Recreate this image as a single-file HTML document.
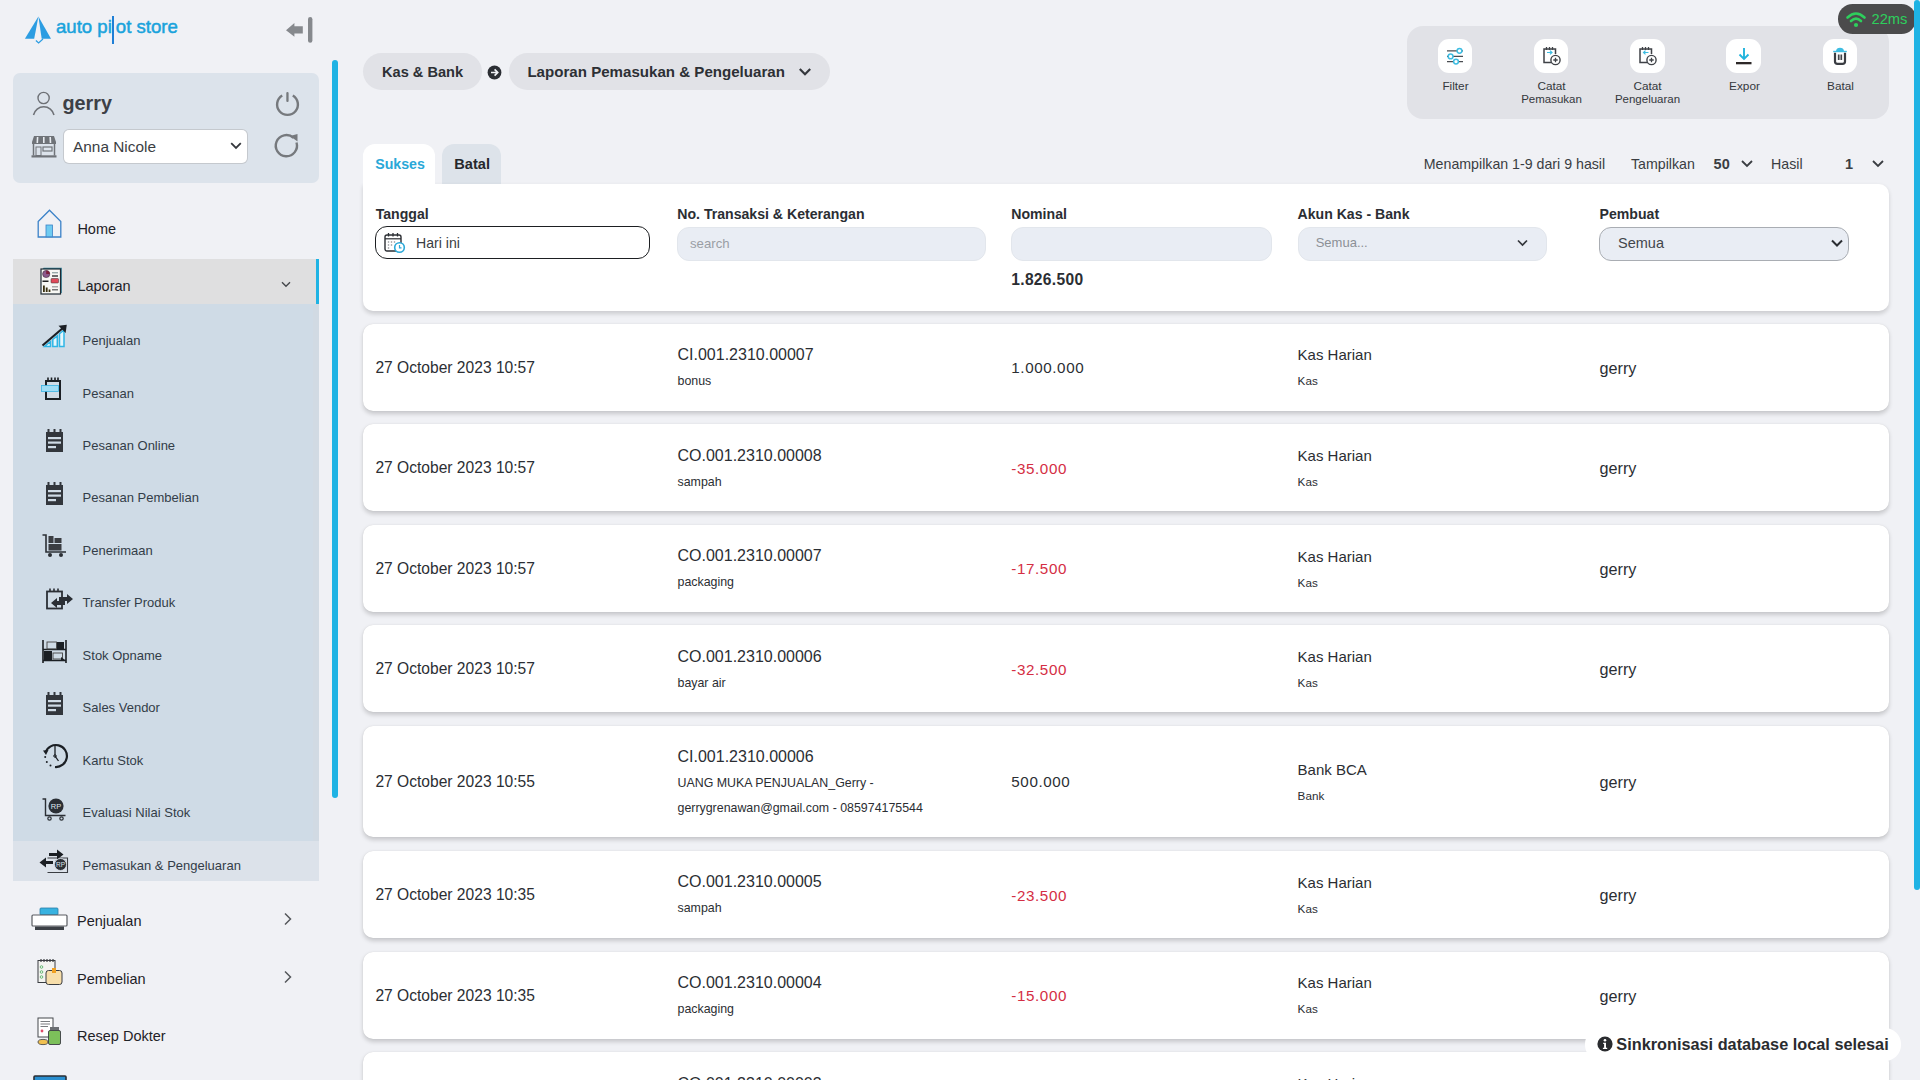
<!DOCTYPE html>
<html><head><meta charset="utf-8"><title>Laporan Pemasukan &amp; Pengeluaran</title>
<style>
html,body{margin:0;padding:0;}
body{width:1920px;height:1080px;overflow:hidden;position:relative;background:#f0f1f5;font-family:"Liberation Sans",sans-serif;}
.t{position:absolute;line-height:1;white-space:nowrap;}
svg{overflow:visible;}
</style></head><body>
<svg style="position:absolute;left:24px;top:15px;" width="28" height="30" viewBox="0 0 28 30">
<path d="M14.4 1.6 L0.9 23.8 L10.2 23.8 Z" fill="#2c9de2"/>
<path d="M14.4 1.6 L27 23.8 L17.7 23.8 Z" fill="#2c9de2"/>
<path d="M11.9 25.5 L14.6 28 L19 24" fill="none" stroke="#2c9de2" stroke-width="1.2"/>
</svg>
<div class="t" style="left:56.00px;top:18.16px;font-size:18.6px;color:#1aa3dc;-webkit-text-stroke:0.5px #1aa3dc;">auto pi</div>
<div style="position:absolute;left:112px;top:16px;width:2.2px;height:28px;background:#1f7fd6;border-radius:0px;"></div>
<div class="t" style="left:115.80px;top:18.16px;font-size:18.6px;color:#1aa3dc;-webkit-text-stroke:0.5px #1aa3dc;">ot store</div>
<svg style="position:absolute;left:284px;top:15px;" width="32" height="30" viewBox="0 0 32 30">
<path d="M2 15.2 L10.4 8 L10.4 11.3 L18.8 11.3 L18.8 18.5 L10.4 18.5 L10.4 21.7 Z" fill="#86898d"/>
<rect x="24" y="2" width="4.4" height="25.8" rx="2.2" fill="#86898d"/>
</svg>
<div style="position:absolute;left:332px;top:60px;width:6px;height:738px;background:#1fb3e4;border-radius:3px;"></div>
<div style="position:absolute;left:13px;top:73px;width:306px;height:109.5px;background:#dce3eb;border-radius:7px;"></div>
<svg style="position:absolute;left:32px;top:90px;" width="24" height="27" viewBox="0 0 24 27">
<circle cx="11.6" cy="8" r="5.6" fill="none" stroke="#6e7176" stroke-width="1.4"/>
<path d="M1.5 25 A10.5 10.5 0 0 1 22 25" fill="none" stroke="#6e7176" stroke-width="1.5"/>
</svg>
<div class="t" style="left:62.50px;top:94.04px;font-size:19.8px;color:#3d4046;font-weight:700;">gerry</div>
<svg style="position:absolute;left:274px;top:90px;" width="27" height="28" viewBox="0 0 27 28">
<path d="M8.2 5.5 A10.4 10.4 0 1 0 18.8 5.5" fill="none" stroke="#76797d" stroke-width="2.4"/>
<rect x="12.3" y="2" width="2.3" height="10" rx="1.1" fill="#76797d"/>
</svg>
<svg style="position:absolute;left:31px;top:135px;" width="26" height="23" viewBox="0 0 26 23">
<path d="M3 1 L23 1 L25 7 L25 9 L1 9 L1 7 Z" fill="#6f7378"/>
<path d="M6.6 2 L6.3 8 M12.8 2 L12.8 8 M19.2 2 L19.5 8" stroke="#e8ecf1" stroke-width="1.6"/>
<path d="M2.5 9 L2.5 20.5 M23.5 9 L23.5 20.5" stroke="#6f7378" stroke-width="1.5"/>
<rect x="5" y="12" width="5" height="8.5" fill="none" stroke="#6f7378" stroke-width="1"/>
<rect x="12" y="12" width="9" height="4" fill="none" stroke="#6f7378" stroke-width="1.2"/>
<rect x="0.5" y="20.3" width="25" height="2.2" fill="#6f7378"/>
</svg>
<div style="position:absolute;left:64px;top:130px;width:183px;height:33px;background:#ffffff;border-radius:5px;box-shadow:0 0 0 1px #c5c9ce;"></div>
<div class="t" style="left:73.00px;top:138.66px;font-size:15.4px;color:#3b3e43;">Anna Nicole</div>
<svg style="position:absolute;left:230px;top:142px;" width="12" height="8" viewBox="0 0 12 8"><path d="M1.2 1.2 L6 6 L10.8 1.2" fill="none" stroke="#34373c" stroke-width="1.8"/></svg>
<svg style="position:absolute;left:274px;top:132px;" width="27" height="28" viewBox="0 0 27 28">
<path d="M22.5 10.5 A10.6 10.6 0 1 1 19.5 5.8" fill="none" stroke="#76797d" stroke-width="2.4"/>
<path d="M16 4 L23.5 2 L23.5 9.5 Z" fill="#76797d"/>
</svg>
<svg style="position:absolute;left:37px;top:209px;" width="26" height="30" viewBox="0 0 26 30">
<path d="M1.2 12.5 L12.5 1.2 L23.8 12.5 L23.8 28 L1.2 28 Z" fill="none" stroke="#3b82c8" stroke-width="1.3"/>
<rect x="9" y="16" width="6.5" height="11.8" fill="#6fcbf1" stroke="#3b82c8" stroke-width="0.8"/>
</svg>
<div class="t" style="left:77.40px;top:221.83px;font-size:14.5px;color:#1f2227;">Home</div>
<div style="position:absolute;left:13px;top:259px;width:306px;height:45px;background:#dfdfe0;border-radius:0px;"></div>
<div style="position:absolute;left:316px;top:259px;width:3px;height:45px;background:#1fb3e4;border-radius:0px;"></div>
<svg style="position:absolute;left:40px;top:267px;" width="23" height="29" viewBox="0 0 23 29">
<path d="M2.5 2.5 L3.5 0.8 L21.8 0.8 L21.8 25.5 L20.5 27" fill="#2f7f95"/>
<rect x="1" y="2" width="19.5" height="25" fill="#f8f8f4" stroke="#1e2a33" stroke-width="1.2"/>
<circle cx="6.2" cy="7" r="3.6" fill="#8c5a8c" stroke="#3a2a3a" stroke-width="0.6"/><path d="M6.2 7 L6.2 3.4 A3.6 3.6 0 0 1 9.8 7 Z" fill="#7a1f3a"/>
<rect x="12" y="5" width="6" height="1.4" fill="#9aa"/><rect x="12" y="8.3" width="6" height="1.4" fill="#333"/>
<rect x="2.5" y="13.5" width="6" height="1.5" fill="#222"/><rect x="11" y="11.5" width="7.5" height="4.5" rx="0.8" fill="#e14b5a" stroke="#333" stroke-width="0.5"/>
<rect x="3" y="18.5" width="1.8" height="6.5" fill="#3a3010"/><rect x="5.8" y="20.5" width="1.8" height="4.5" fill="#3a3010"/><rect x="8.6" y="22.5" width="1.8" height="2.5" fill="#3a3010"/>
<rect x="12" y="19" width="6" height="1.5" fill="#aaa"/><rect x="12" y="22" width="6" height="1.5" fill="#777"/>
</svg>
<div class="t" style="left:77.40px;top:278.83px;font-size:14.5px;color:#1f2227;">Laporan</div>
<svg style="position:absolute;left:281px;top:281px;" width="11" height="8" viewBox="0 0 11 8"><path d="M1 1.2 L5 5.2 L9 1.2" fill="none" stroke="#45484c" stroke-width="1.4"/></svg>
<div style="position:absolute;left:13px;top:304px;width:306px;height:537px;background:#cfdbe6;border-radius:0px;"></div>
<div style="position:absolute;left:313.2px;top:304px;width:5.8px;height:537px;background:#d1dae3;border-radius:0px;"></div>
<div style="position:absolute;left:13px;top:840.5px;width:306px;height:40px;background:#dce2ea;border-radius:0px;"></div>
<div class="t" style="left:82.60px;top:333.60px;font-size:13px;color:#333d48;">Penjualan</div>
<div class="t" style="left:82.60px;top:386.80px;font-size:13px;color:#333d48;">Pesanan</div>
<div class="t" style="left:82.60px;top:439.00px;font-size:13px;color:#333d48;">Pesanan Online</div>
<div class="t" style="left:82.60px;top:491.20px;font-size:13px;color:#333d48;">Pesanan Pembelian</div>
<div class="t" style="left:82.60px;top:543.60px;font-size:13px;color:#333d48;">Penerimaan</div>
<div class="t" style="left:82.60px;top:596.00px;font-size:13px;color:#333d48;">Transfer Produk</div>
<div class="t" style="left:82.60px;top:648.60px;font-size:13px;color:#333d48;">Stok Opname</div>
<div class="t" style="left:82.60px;top:701.20px;font-size:13px;color:#333d48;">Sales Vendor</div>
<div class="t" style="left:82.60px;top:753.60px;font-size:13px;color:#333d48;">Kartu Stok</div>
<div class="t" style="left:82.60px;top:806.00px;font-size:13px;color:#333d48;">Evaluasi Nilai Stok</div>
<div class="t" style="left:82.60px;top:858.60px;font-size:13px;color:#333d48;">Pemasukan &amp; Pengeluaran</div>
<svg style="position:absolute;left:41px;top:323px;" width="27" height="25" viewBox="0 0 27 25"><path d="M3.5 23.5 L9.5 18.5 L9.5 23.5 Z M11.8 23.5 L11.8 16.5 L16.3 12.8 L16.3 23.5 Z M18.5 23.5 L18.5 10.8 L23 7 L23 23.5 Z" fill="#e6f6fc" stroke="#2fb6e6" stroke-width="1.5" stroke-linejoin="miter"/>
<path d="M1.5 22.5 L22.5 4.5" stroke="#1b1f24" stroke-width="2.2"/><path d="M17.5 2.8 L25.8 1.8 L24.6 10 Z" fill="#1b1f24"/></svg>
<svg style="position:absolute;left:41px;top:377px;" width="22" height="24" viewBox="0 0 22 24"><rect x="5" y="4" width="14" height="18" fill="none" stroke="#1b1f24" stroke-width="2"/>
<path d="M7 0.5 L7 5 M10.5 0.5 L10.5 5 M14 0.5 L14 5 M17 0.5 L17 5" stroke="#1b1f24" stroke-width="1.6"/>
<rect x="0.5" y="8.5" width="17" height="6" fill="#9fdcf5" stroke="#38b4e4" stroke-width="0.8"/></svg>
<svg style="position:absolute;left:46px;top:429px;" width="17" height="24" viewBox="0 0 17 24"><rect x="0" y="3" width="17" height="20" fill="#32363c"/><path d="M2.5 0 L2.5 4 M8.5 0 L8.5 4 M14.5 0 L14.5 4" stroke="#32363c" stroke-width="2"/>
<rect x="2" y="8" width="13" height="2.2" fill="#cfdbe6"/><rect x="2" y="12.5" width="13" height="2.2" fill="#cfdbe6"/><rect x="2" y="17" width="8" height="2.2" fill="#cfdbe6"/></svg>
<svg style="position:absolute;left:46px;top:482px;" width="17" height="24" viewBox="0 0 17 24"><rect x="0" y="3" width="17" height="20" fill="#32363c"/><path d="M2.5 0 L2.5 4 M8.5 0 L8.5 4 M14.5 0 L14.5 4" stroke="#32363c" stroke-width="2"/>
<rect x="2" y="8" width="13" height="2.2" fill="#cfdbe6"/><rect x="2" y="12.5" width="13" height="2.2" fill="#cfdbe6"/><rect x="2" y="17" width="8" height="2.2" fill="#cfdbe6"/></svg>
<svg style="position:absolute;left:42px;top:534px;" width="25" height="24" viewBox="0 0 25 24"><path d="M0.5 1 L4 1 L4 18 L24 18" fill="none" stroke="#2b2f35" stroke-width="1.6"/>
<rect x="6.5" y="2" width="5" height="7" fill="#3a3d42"/><rect x="12.5" y="4" width="7" height="5" fill="#3a3d42"/><rect x="6.5" y="10" width="13" height="6.5" fill="#3a3d42"/>
<circle cx="8" cy="21" r="2" fill="#2b2f35"/><circle cx="19" cy="21" r="2" fill="#2b2f35"/></svg>
<svg style="position:absolute;left:46px;top:588px;" width="28" height="22" viewBox="0 0 28 22"><rect x="1" y="3.5" width="15" height="17" fill="none" stroke="#2b2f35" stroke-width="1.8"/>
<path d="M4 0.5 L4 4 M8 0.5 L8 4 M12 0.5 L12 4" stroke="#2b2f35" stroke-width="1.6"/>
<path d="M27 11 L21 6 L21 9 L13 9 L13 13 L21 13 L21 16 Z" fill="#2b2f35"/>
<path d="M5 15 L11 10 L11 13 L19 13 L19 17 L11 17 L11 20 Z" fill="#2b2f35"/></svg>
<svg style="position:absolute;left:42px;top:640px;" width="25" height="24" viewBox="0 0 25 24"><path d="M1 0 L1 23 M24 0 L24 23" stroke="#1b1f24" stroke-width="1.6"/><path d="M1 9.5 L24 9.5 M1 20.5 L24 20.5" stroke="#1b1f24" stroke-width="1.6"/>
<rect x="5" y="2" width="9.5" height="7" fill="none" stroke="#444" stroke-width="0.9"/><rect x="15" y="2" width="7" height="7" fill="#1b1f24"/>
<rect x="2" y="11" width="8" height="9" fill="#1b1f24"/><rect x="11" y="13" width="9.5" height="6" fill="none" stroke="#444" stroke-width="0.9"/><path d="M19 17 L23 20 L19 20 Z" fill="#1b1f24"/></svg>
<svg style="position:absolute;left:46px;top:692px;" width="17" height="24" viewBox="0 0 17 24"><rect x="0" y="3" width="17" height="20" fill="#32363c"/><path d="M2.5 0 L2.5 4 M8.5 0 L8.5 4 M14.5 0 L14.5 4" stroke="#32363c" stroke-width="2"/>
<rect x="2" y="8" width="13" height="2.2" fill="#cfdbe6"/><rect x="2" y="12.5" width="13" height="2.2" fill="#cfdbe6"/><rect x="2" y="17" width="8" height="2.2" fill="#cfdbe6"/></svg>
<svg style="position:absolute;left:43px;top:744px;" width="22" height="23" viewBox="0 0 22 23"><path d="M2.5 8.5 A11 11 0 1 1 12 23" fill="none" stroke="#1b1f24" stroke-width="2.2"/>
<path d="M0 6.5 L5.5 6 L3 11 Z" fill="#1b1f24"/>
<path d="M12 2 L12 12 L15.5 17" fill="none" stroke="#1b1f24" stroke-width="1.3"/><circle cx="12" cy="12" r="1.3" fill="none" stroke="#1b1f24" stroke-width="0.9"/>
<circle cx="2.2" cy="13" r="1" fill="#1b1f24"/><circle cx="3.8" cy="18" r="1" fill="#1b1f24"/><circle cx="7.5" cy="21.5" r="1" fill="#1b1f24"/></svg>
<svg style="position:absolute;left:42px;top:797.5px;" width="25" height="24" viewBox="0 0 25 24"><path d="M0.5 1 L3.5 1 L3.5 17.5 L23.5 17.5" fill="none" stroke="#2b2f35" stroke-width="1.4"/>
<circle cx="14" cy="8" r="7.6" fill="#2b2f35"/><text x="14" y="10.8" font-size="7.5" font-family="Liberation Sans" fill="#dfe6ee" text-anchor="middle">RP</text>
<circle cx="7.5" cy="20.5" r="1.7" fill="none" stroke="#2b2f35" stroke-width="1.2"/><circle cx="19.5" cy="20.5" r="1.7" fill="none" stroke="#2b2f35" stroke-width="1.2"/></svg>
<svg style="position:absolute;left:39px;top:849px;" width="30" height="24" viewBox="0 0 30 24"><path d="M8.5 9 L28.5 9 L28.5 23.5 L8.5 23.5" fill="none" stroke="#3a3d42" stroke-width="1.1"/>
<path d="M10 4 L18 4 L18 0.5 L24.5 5.5 L18 10.5 L18 7 L10 7 Z" fill="#1b1f24"/>
<path d="M14 12 L7 12 L7 8.5 L0.5 13.5 L7 18.5 L7 15 L14 15 Z" fill="#1b1f24"/>
<circle cx="21.5" cy="15.5" r="6" fill="#2b2f35" stroke="#dce2ea" stroke-width="0.8"/><text x="21.5" y="18" font-size="6.5" font-family="Liberation Sans" fill="#dce2ea" text-anchor="middle">RP</text></svg>
<div class="t" style="left:77.00px;top:913.93px;font-size:14.5px;color:#1f2227;">Penjualan</div>
<div class="t" style="left:77.00px;top:971.73px;font-size:14.5px;color:#1f2227;">Pembelian</div>
<div class="t" style="left:77.00px;top:1028.73px;font-size:14.5px;color:#1f2227;">Resep Dokter</div>
<svg style="position:absolute;left:283px;top:912px;" width="10" height="14" viewBox="0 0 10 14"><path d="M2 1.5 L7.5 7 L2 12.5" fill="none" stroke="#55585c" stroke-width="1.5"/></svg>
<svg style="position:absolute;left:283px;top:970px;" width="10" height="14" viewBox="0 0 10 14"><path d="M2 1.5 L7.5 7 L2 12.5" fill="none" stroke="#55585c" stroke-width="1.5"/></svg>
<svg style="position:absolute;left:31px;top:906px;" width="37" height="28" viewBox="0 0 37 28">
<rect x="9" y="2" width="18" height="7" rx="1" fill="#38b2e0" stroke="#2a7fa8" stroke-width="0.8"/>
<rect x="1" y="9" width="35" height="11" rx="1" fill="#ffffff" stroke="#5a5d62" stroke-width="1.2"/>
<rect x="4" y="20.5" width="29" height="3.5" fill="#3c4046"/>
</svg>
<svg style="position:absolute;left:37px;top:958px;" width="28" height="29" viewBox="0 0 28 29">
<rect x="1" y="2.5" width="17" height="22" fill="#f3f3f0" stroke="#3a3d42" stroke-width="1"/>
<path d="M4 1 L4 4 M7 1 L7 4 M10 1 L10 4 M13 1 L13 4 M16 1 L16 4" stroke="#3a3d42" stroke-width="1.2"/>
<circle cx="4.5" cy="9" r="1.3" fill="none" stroke="#59b36a" stroke-width="0.9"/><circle cx="4.5" cy="14" r="1.3" fill="none" stroke="#59b36a" stroke-width="0.9"/><circle cx="4.5" cy="19" r="1.3" fill="none" stroke="#59b36a" stroke-width="0.9"/>
<rect x="9" y="12.5" width="16" height="14" rx="2.5" fill="#f7deaa" stroke="#3a3d42" stroke-width="1"/>
<rect x="15" y="10" width="4" height="5" fill="#f0a020"/>
</svg>
<svg style="position:absolute;left:37px;top:1017px;" width="26" height="30" viewBox="0 0 26 30">
<rect x="1" y="1" width="15" height="19" fill="#ffffff" stroke="#45484c" stroke-width="1"/>
<path d="M3.5 4.5 L13 4.5 M3.5 7 L13 7 M3.5 9.5 L11 9.5" stroke="#6b6e72" stroke-width="0.9"/>
<circle cx="5" cy="14" r="1.4" fill="#e04b6a"/>
<rect x="13" y="10" width="9" height="3.5" fill="#6b6e72"/>
<rect x="11.5" y="13.5" width="12" height="14" rx="1.5" fill="#7cc05a" stroke="#3a3d42" stroke-width="0.9"/>
<ellipse cx="6" cy="25" rx="5" ry="2.6" fill="#f0c050" stroke="#3a3d42" stroke-width="0.8"/>
</svg>
<svg style="position:absolute;left:33px;top:1074.5px;" width="34" height="8" viewBox="0 0 34 8"><rect x="1" y="1" width="32" height="10" rx="1" fill="#2a8fd0" stroke="#2b2f35" stroke-width="1.6"/></svg>
<div style="position:absolute;left:363px;top:53px;width:118.5px;height:37px;background:#e1e2e7;border-radius:18.5px;"></div>
<div class="t" style="left:382.00px;top:65.04px;font-size:14.6px;color:#2d3035;font-weight:700;">Kas &amp; Bank</div>
<svg style="position:absolute;left:487px;top:65px;" width="15" height="15" viewBox="0 0 15 15"><circle cx="7.5" cy="7.5" r="6.9" fill="#2b2e33"/><path d="M4 7.5 L10.5 7.5 M7.6 4.4 L10.7 7.5 L7.6 10.6" fill="none" stroke="#f0f1f5" stroke-width="1.7"/></svg>
<div style="position:absolute;left:508.5px;top:53px;width:321.5px;height:37px;background:#e1e2e7;border-radius:18.5px;"></div>
<div class="t" style="left:527.40px;top:64.02px;font-size:15.1px;color:#2d3035;font-weight:700;">Laporan Pemasukan &amp; Pengeluaran</div>
<svg style="position:absolute;left:798px;top:67px;" width="14" height="10" viewBox="0 0 14 10"><path d="M1.8 2 L7 7.2 L12.2 2" fill="none" stroke="#34373c" stroke-width="2.2"/></svg>
<div style="position:absolute;left:1407px;top:25.5px;width:482px;height:93px;background:#e1e2e7;border-radius:16px;"></div>
<div style="position:absolute;left:1437.8px;top:38.5px;width:34.5px;height:34.5px;background:#ffffff;border-radius:11px;"></div>
<div style="position:absolute;left:1533.8px;top:38.5px;width:34.5px;height:34.5px;background:#ffffff;border-radius:11px;"></div>
<div style="position:absolute;left:1630.1px;top:38.5px;width:34.5px;height:34.5px;background:#ffffff;border-radius:11px;"></div>
<div style="position:absolute;left:1726.4px;top:38.5px;width:34.5px;height:34.5px;background:#ffffff;border-radius:11px;"></div>
<div style="position:absolute;left:1822.8px;top:38.5px;width:34.5px;height:34.5px;background:#ffffff;border-radius:11px;"></div>
<div class="t" style="left:1155.50px;width:600px;text-align:center;top:80.81px;font-size:11.8px;color:#34373c;">Filter</div>
<div class="t" style="left:1251.50px;width:600px;text-align:center;top:80.81px;font-size:11.8px;color:#34373c;">Catat</div>
<div class="t" style="left:1251.50px;width:600px;text-align:center;top:93.87px;font-size:11.5px;color:#34373c;">Pemasukan</div>
<div class="t" style="left:1347.50px;width:600px;text-align:center;top:80.81px;font-size:11.8px;color:#34373c;">Catat</div>
<div class="t" style="left:1347.50px;width:600px;text-align:center;top:93.87px;font-size:11.5px;color:#34373c;">Pengeluaran</div>
<div class="t" style="left:1444.50px;width:600px;text-align:center;top:80.81px;font-size:11.8px;color:#34373c;">Expor</div>
<div class="t" style="left:1540.50px;width:600px;text-align:center;top:80.81px;font-size:11.8px;color:#34373c;">Batal</div>
<svg style="position:absolute;left:1445px;top:46.5px;" width="20" height="18" viewBox="0 0 20 18">
<path d="M2 3.8 L18 3.8 M2 9.4 L18 9.4 M2 14.6 L18 14.6" stroke="#4a4d52" stroke-width="1.3"/>
<circle cx="14.5" cy="3.8" r="2.4" fill="#ffffff" stroke="#3ebde2" stroke-width="1.5"/>
<circle cx="5.6" cy="9.4" r="2.4" fill="#ffffff" stroke="#3ebde2" stroke-width="1.5"/>
<circle cx="11" cy="14.6" r="2.4" fill="#ffffff" stroke="#3ebde2" stroke-width="1.5"/>
</svg>
<svg style="position:absolute;left:1542px;top:45.5px;" width="20" height="20" viewBox="0 0 20 20">
<path d="M9.5 16.5 L2 16.5 L2 3 L13.5 3 L13.5 8" fill="none" stroke="#3f4247" stroke-width="1.5"/>
<path d="M4.5 1 L4.5 4 M7.5 1 L7.5 4 M10.5 1 L10.5 4" stroke="#3f4247" stroke-width="1.3"/>
<circle cx="13.5" cy="14" r="4.6" fill="#ffffff" stroke="#3f4247" stroke-width="1.4"/>
<path d="M11.3 14 L15.7 14 M13.5 11.8 L13.5 16.2" stroke="#3f4247" stroke-width="1.3"/>
<path d="M5 6.5 L10 6.5 M8 4.6 L10 6.5 L8 8.4" fill="none" stroke="#3ebde2" stroke-width="1.2"/></svg>
<svg style="position:absolute;left:1638px;top:45.5px;" width="20" height="20" viewBox="0 0 20 20">
<path d="M9.5 16.5 L2 16.5 L2 3 L13.5 3 L13.5 8" fill="none" stroke="#3f4247" stroke-width="1.5"/>
<path d="M4.5 1 L4.5 4 M7.5 1 L7.5 4 M10.5 1 L10.5 4" stroke="#3f4247" stroke-width="1.3"/>
<circle cx="13.5" cy="14" r="4.6" fill="#ffffff" stroke="#3f4247" stroke-width="1.4"/>
<path d="M11.3 14 L15.7 14 M13.5 11.8 L13.5 16.2" stroke="#3f4247" stroke-width="1.3"/>
<path d="M10.5 6.5 L5.5 6.5 M7.5 4.6 L5.5 6.5 L7.5 8.4" fill="none" stroke="#3ebde2" stroke-width="1.2"/></svg>
<svg style="position:absolute;left:1734px;top:45.5px;" width="20" height="20" viewBox="0 0 20 20">
<path d="M10 2 L10 12.5 M5.5 8.5 L10 13 L14.5 8.5" fill="none" stroke="#22b4dd" stroke-width="1.9"/>
<rect x="2" y="16" width="15.5" height="2.3" fill="#2d2828"/>
</svg>
<svg style="position:absolute;left:1831px;top:45.5px;" width="18" height="20" viewBox="0 0 18 20">
<path d="M2.2 5.5 L15.8 5.5" stroke="#3ebde2" stroke-width="1.4"/><path d="M5 5 Q5.5 1.8 9 1.8 Q12.5 1.8 13 5 Z" fill="#3ebde2"/>
<path d="M4 6.8 L4 15.5 Q4 17.8 6.5 17.8 L11.5 17.8 Q14 17.8 14 15.5 L14 6.8" fill="none" stroke="#3a3d42" stroke-width="2.2"/>
<path d="M7.4 8.5 L7.4 14 M9 8.5 L9 14 M10.6 8.5 L10.6 14" stroke="#3a3d42" stroke-width="1.1"/>
</svg>
<div style="position:absolute;left:1838px;top:4px;width:78px;height:29.5px;background:#4b4b4c;border-radius:14.7px;"></div>
<svg style="position:absolute;left:1846px;top:11px;" width="20" height="17" viewBox="0 0 20 17">
<path d="M1.5 6.5 Q10 -1.5 18.5 6.5" fill="none" stroke="#2ecf5c" stroke-width="2.6" stroke-linecap="round"/>
<path d="M5 10 Q10 5.2 15 10" fill="none" stroke="#2ecf5c" stroke-width="2.6" stroke-linecap="round"/>
<circle cx="10" cy="14" r="2.1" fill="#2ecf5c"/>
</svg>
<div class="t" style="left:1871.50px;top:11.86px;font-size:14.7px;color:#2ecf5c;">22ms</div>
<div style="position:absolute;left:1913.5px;top:0px;width:6.5px;height:890px;background:#1fb3e4;border-radius:3px;"></div>
<div style="position:absolute;left:442px;top:144px;width:59px;height:40px;background:#dde3ea;border-radius:12px 12px 0 0;"></div>
<div style="position:absolute;left:363px;top:184px;width:1526px;height:126.6px;background:#fff;border-radius:0 10px 10px 10px;box-shadow:0 2.5px 4px rgba(0,0,0,0.15);"></div>
<div style="position:absolute;left:363px;top:144px;width:72px;height:45px;background:#ffffff;border-radius:12px 12px 0 0;"></div>
<div class="t" style="left:375.20px;top:157.48px;font-size:14.2px;color:#2aa8d8;font-weight:700;">Sukses</div>
<div class="t" style="left:454.30px;top:157.14px;font-size:14.6px;color:#25282c;font-weight:700;">Batal</div>
<div class="t" style="left:1423.80px;top:157.23px;font-size:14.2px;color:#3a3d42;">Menampilkan 1-9 dari 9 hasil</div>
<div class="t" style="left:1631.00px;top:157.23px;font-size:14.2px;color:#3a3d42;">Tampilkan</div>
<div class="t" style="left:1713.60px;top:156.98px;font-size:14.5px;color:#3a3d42;font-weight:700;">50</div>
<svg style="position:absolute;left:1740px;top:159px;" width="14" height="10" viewBox="0 0 14 10"><path d="M2 2 L7 7 L12 2" fill="none" stroke="#3a3d42" stroke-width="1.8"/></svg>
<div class="t" style="left:1771.00px;top:157.23px;font-size:14.2px;color:#3a3d42;">Hasil</div>
<div class="t" style="left:1845.00px;top:156.98px;font-size:14.5px;color:#3a3d42;font-weight:700;">1</div>
<svg style="position:absolute;left:1871px;top:159px;" width="14" height="10" viewBox="0 0 14 10"><path d="M2 2 L7 7 L12 2" fill="none" stroke="#3a3d42" stroke-width="1.8"/></svg>
<div class="t" style="left:375.70px;top:207.26px;font-size:14.1px;color:#2b2e33;font-weight:700;">Tanggal</div>
<div class="t" style="left:677.30px;top:207.26px;font-size:14.1px;color:#2b2e33;font-weight:700;">No. Transaksi &amp; Keterangan</div>
<div class="t" style="left:1011.30px;top:207.26px;font-size:14.1px;color:#2b2e33;font-weight:700;">Nominal</div>
<div class="t" style="left:1297.50px;top:207.26px;font-size:14.1px;color:#2b2e33;font-weight:700;">Akun Kas - Bank</div>
<div class="t" style="left:1599.60px;top:207.26px;font-size:14.1px;color:#2b2e33;font-weight:700;">Pembuat</div>
<div style="position:absolute;left:375px;top:226px;width:273.4px;height:31.4px;border:1.8px solid #1d1f22;border-radius:12px;background:#fff;"></div>
<svg style="position:absolute;left:384px;top:232px;" width="22" height="21" viewBox="0 0 22 21">
<rect x="1" y="3" width="16" height="16" rx="2" fill="none" stroke="#2b2e33" stroke-width="1.4"/>
<path d="M1 6.8 L17 6.8" stroke="#2b2e33" stroke-width="1.2"/>
<path d="M4.5 1 L4.5 4.5 M9 1 L9 4.5 M13.5 1 L13.5 4.5" stroke="#2b2e33" stroke-width="1.3"/>
<g fill="#8a8d91"><circle cx="4.5" cy="10" r="0.8"/><circle cx="7.5" cy="10" r="0.8"/><circle cx="10.5" cy="10" r="0.8"/><circle cx="4.5" cy="13" r="0.8"/><circle cx="7.5" cy="13" r="0.8"/><circle cx="4.5" cy="16" r="0.8"/></g>
<circle cx="15.5" cy="15.5" r="4.8" fill="#ffffff" stroke="#2aa8d8" stroke-width="1.6"/>
<path d="M15.5 13 L15.5 15.8 L17.5 15.8" fill="none" stroke="#2aa8d8" stroke-width="1.2"/>
</svg>
<div class="t" style="left:416.00px;top:235.76px;font-size:14.1px;color:#3b3e43;">Hari ini</div>
<div style="position:absolute;left:677px;top:226.5px;width:307px;height:32.5px;border:1px solid #e2e6ec;border-radius:12px;background:#e9edf4;"></div>
<div class="t" style="left:690.00px;top:236.53px;font-size:13.2px;color:#9a9ea4;">search</div>
<div style="position:absolute;left:1011px;top:226.5px;width:259px;height:32.5px;border:1px solid #e2e6ec;border-radius:12px;background:#e9edf4;"></div>
<div style="position:absolute;left:1297.5px;top:226.5px;width:247.5px;height:32.5px;border:1px solid #e2e6ec;border-radius:12px;background:#e9edf4;"></div>
<div class="t" style="left:1315.70px;top:235.70px;font-size:13px;color:#8c9096;">Semua...</div>
<svg style="position:absolute;left:1516px;top:238px;" width="13" height="10" viewBox="0 0 13 10"><path d="M2 2.5 L6.5 7 L11 2.5" fill="none" stroke="#34373c" stroke-width="1.7"/></svg>
<div style="position:absolute;left:1599px;top:226.5px;width:248px;height:32px;border:1px solid #a9adb3;border-radius:12px;background:#e9edf4;"></div>
<div class="t" style="left:1618.00px;top:236.03px;font-size:14.5px;color:#43464b;">Semua</div>
<svg style="position:absolute;left:1830px;top:238px;" width="14" height="11" viewBox="0 0 14 11"><path d="M2 2.5 L7 7.5 L12 2.5" fill="none" stroke="#2b2e33" stroke-width="2"/></svg>
<div class="t" style="left:1011.30px;top:272.29px;font-size:15.6px;color:#2b2e33;font-weight:700;letter-spacing:0.3px;">1.826.500</div>
<div style="position:absolute;left:363px;top:323.7px;width:1526px;height:87.2px;background:#fff;border-radius:10px;box-shadow:0 2.5px 4px rgba(0,0,0,0.17),0 0 1px rgba(0,0,0,0.12);"></div>
<div class="t" style="left:375.40px;top:359.89px;font-size:15.6px;color:#2b2e33;">27 October 2023 10:57</div>
<div class="t" style="left:677.50px;top:347.06px;font-size:16px;color:#2b2e33;">CI.001.2310.00007</div>
<div class="t" style="left:677.50px;top:375.00px;font-size:12.4px;color:#2b2e33;">bonus</div>
<div class="t" style="left:1011.30px;top:360.23px;font-size:15.2px;color:#2b2e33;letter-spacing:0.6px;">1.000.000</div>
<div class="t" style="left:1297.60px;top:347.40px;font-size:15px;color:#2b2e33;">Kas Harian</div>
<div class="t" style="left:1297.60px;top:375.40px;font-size:11.7px;color:#2b2e33;">Kas</div>
<div class="t" style="left:1599.50px;top:359.79px;font-size:16.2px;color:#2b2e33;">gerry</div>
<div style="position:absolute;left:363px;top:424.2px;width:1526px;height:87.2px;background:#fff;border-radius:10px;box-shadow:0 2.5px 4px rgba(0,0,0,0.17),0 0 1px rgba(0,0,0,0.12);"></div>
<div class="t" style="left:375.40px;top:460.39px;font-size:15.6px;color:#2b2e33;">27 October 2023 10:57</div>
<div class="t" style="left:677.50px;top:447.56px;font-size:16px;color:#2b2e33;">CO.001.2310.00008</div>
<div class="t" style="left:677.50px;top:475.50px;font-size:12.4px;color:#2b2e33;">sampah</div>
<div class="t" style="left:1011.30px;top:460.73px;font-size:15.2px;color:#d42e44;letter-spacing:0.6px;">-35.000</div>
<div class="t" style="left:1297.60px;top:447.90px;font-size:15px;color:#2b2e33;">Kas Harian</div>
<div class="t" style="left:1297.60px;top:475.90px;font-size:11.7px;color:#2b2e33;">Kas</div>
<div class="t" style="left:1599.50px;top:460.29px;font-size:16.2px;color:#2b2e33;">gerry</div>
<div style="position:absolute;left:363px;top:524.8px;width:1526px;height:87.2px;background:#fff;border-radius:10px;box-shadow:0 2.5px 4px rgba(0,0,0,0.17),0 0 1px rgba(0,0,0,0.12);"></div>
<div class="t" style="left:375.40px;top:560.99px;font-size:15.6px;color:#2b2e33;">27 October 2023 10:57</div>
<div class="t" style="left:677.50px;top:548.16px;font-size:16px;color:#2b2e33;">CO.001.2310.00007</div>
<div class="t" style="left:677.50px;top:576.10px;font-size:12.4px;color:#2b2e33;">packaging</div>
<div class="t" style="left:1011.30px;top:561.33px;font-size:15.2px;color:#d42e44;letter-spacing:0.6px;">-17.500</div>
<div class="t" style="left:1297.60px;top:548.50px;font-size:15px;color:#2b2e33;">Kas Harian</div>
<div class="t" style="left:1297.60px;top:576.50px;font-size:11.7px;color:#2b2e33;">Kas</div>
<div class="t" style="left:1599.50px;top:560.89px;font-size:16.2px;color:#2b2e33;">gerry</div>
<div style="position:absolute;left:363px;top:625.2px;width:1526px;height:87.2px;background:#fff;border-radius:10px;box-shadow:0 2.5px 4px rgba(0,0,0,0.17),0 0 1px rgba(0,0,0,0.12);"></div>
<div class="t" style="left:375.40px;top:661.39px;font-size:15.6px;color:#2b2e33;">27 October 2023 10:57</div>
<div class="t" style="left:677.50px;top:648.56px;font-size:16px;color:#2b2e33;">CO.001.2310.00006</div>
<div class="t" style="left:677.50px;top:676.50px;font-size:12.4px;color:#2b2e33;">bayar air</div>
<div class="t" style="left:1011.30px;top:661.73px;font-size:15.2px;color:#d42e44;letter-spacing:0.6px;">-32.500</div>
<div class="t" style="left:1297.60px;top:648.90px;font-size:15px;color:#2b2e33;">Kas Harian</div>
<div class="t" style="left:1297.60px;top:676.90px;font-size:11.7px;color:#2b2e33;">Kas</div>
<div class="t" style="left:1599.50px;top:661.29px;font-size:16.2px;color:#2b2e33;">gerry</div>
<div style="position:absolute;left:363px;top:725.7px;width:1526px;height:111.5px;background:#fff;border-radius:10px;box-shadow:0 2.5px 4px rgba(0,0,0,0.17),0 0 1px rgba(0,0,0,0.12);"></div>
<div class="t" style="left:375.40px;top:774.04px;font-size:15.6px;color:#2b2e33;">27 October 2023 10:55</div>
<div class="t" style="left:677.50px;top:749.06px;font-size:16px;color:#2b2e33;">CI.001.2310.00006</div>
<div class="t" style="left:677.50px;top:777.00px;font-size:12.4px;color:#2b2e33;">UANG MUKA PENJUALAN_Gerry -</div>
<div class="t" style="left:677.50px;top:801.80px;font-size:12.4px;color:#2b2e33;">gerrygrenawan@gmail.com - 085974175544</div>
<div class="t" style="left:1011.30px;top:774.38px;font-size:15.2px;color:#2b2e33;letter-spacing:0.6px;">500.000</div>
<div class="t" style="left:1297.60px;top:761.55px;font-size:15px;color:#2b2e33;">Bank BCA</div>
<div class="t" style="left:1297.60px;top:789.55px;font-size:11.7px;color:#2b2e33;">Bank</div>
<div class="t" style="left:1599.50px;top:773.94px;font-size:16.2px;color:#2b2e33;">gerry</div>
<div style="position:absolute;left:363px;top:851.0px;width:1526px;height:87.2px;background:#fff;border-radius:10px;box-shadow:0 2.5px 4px rgba(0,0,0,0.17),0 0 1px rgba(0,0,0,0.12);"></div>
<div class="t" style="left:375.40px;top:887.19px;font-size:15.6px;color:#2b2e33;">27 October 2023 10:35</div>
<div class="t" style="left:677.50px;top:874.36px;font-size:16px;color:#2b2e33;">CO.001.2310.00005</div>
<div class="t" style="left:677.50px;top:902.30px;font-size:12.4px;color:#2b2e33;">sampah</div>
<div class="t" style="left:1011.30px;top:887.53px;font-size:15.2px;color:#d42e44;letter-spacing:0.6px;">-23.500</div>
<div class="t" style="left:1297.60px;top:874.70px;font-size:15px;color:#2b2e33;">Kas Harian</div>
<div class="t" style="left:1297.60px;top:902.70px;font-size:11.7px;color:#2b2e33;">Kas</div>
<div class="t" style="left:1599.50px;top:887.09px;font-size:16.2px;color:#2b2e33;">gerry</div>
<div style="position:absolute;left:363px;top:951.7px;width:1526px;height:87.2px;background:#fff;border-radius:10px;box-shadow:0 2.5px 4px rgba(0,0,0,0.17),0 0 1px rgba(0,0,0,0.12);"></div>
<div class="t" style="left:375.40px;top:987.89px;font-size:15.6px;color:#2b2e33;">27 October 2023 10:35</div>
<div class="t" style="left:677.50px;top:975.06px;font-size:16px;color:#2b2e33;">CO.001.2310.00004</div>
<div class="t" style="left:677.50px;top:1003.00px;font-size:12.4px;color:#2b2e33;">packaging</div>
<div class="t" style="left:1011.30px;top:988.23px;font-size:15.2px;color:#d42e44;letter-spacing:0.6px;">-15.000</div>
<div class="t" style="left:1297.60px;top:975.40px;font-size:15px;color:#2b2e33;">Kas Harian</div>
<div class="t" style="left:1297.60px;top:1003.40px;font-size:11.7px;color:#2b2e33;">Kas</div>
<div class="t" style="left:1599.50px;top:987.79px;font-size:16.2px;color:#2b2e33;">gerry</div>
<div style="position:absolute;left:363px;top:1052.3px;width:1526px;height:87.2px;background:#fff;border-radius:10px;box-shadow:0 2.5px 4px rgba(0,0,0,0.17),0 0 1px rgba(0,0,0,0.12);"></div>
<div class="t" style="left:375.40px;top:1088.49px;font-size:15.6px;color:#2b2e33;">27 October 2023 10:35</div>
<div class="t" style="left:677.50px;top:1075.66px;font-size:16px;color:#2b2e33;">CO.001.2310.00003</div>
<div class="t" style="left:677.50px;top:1103.60px;font-size:12.4px;color:#2b2e33;">sampah</div>
<div class="t" style="left:1011.30px;top:1088.83px;font-size:15.2px;color:#d42e44;letter-spacing:0.6px;">-20.000</div>
<div class="t" style="left:1297.60px;top:1076.00px;font-size:15px;color:#2b2e33;">Kas Harian</div>
<div class="t" style="left:1297.60px;top:1104.00px;font-size:11.7px;color:#2b2e33;">Kas</div>
<div class="t" style="left:1599.50px;top:1088.39px;font-size:16.2px;color:#2b2e33;">gerry</div>
<div style="position:absolute;left:1584.5px;top:1027.8px;width:316px;height:33px;background:#fff;border-radius:16px;"></div>
<svg style="position:absolute;left:1597px;top:1036px;" width="16" height="16" viewBox="0 0 16 16"><circle cx="8" cy="8" r="7.6" fill="#2a2c2f"/><circle cx="8" cy="4.2" r="1.3" fill="#fff"/><path d="M6.2 6.8 L9 6.8 L9 11.8 L10.2 11.8 L10.2 13 L5.9 13 L5.9 11.8 L7.1 11.8 L7.1 8 L6.2 8 Z" fill="#fff"/></svg>
<div class="t" style="left:1616.30px;top:1036.00px;font-size:16.3px;color:#2a2c2f;font-weight:700;">Sinkronisasi database local selesai</div>
</body></html>
